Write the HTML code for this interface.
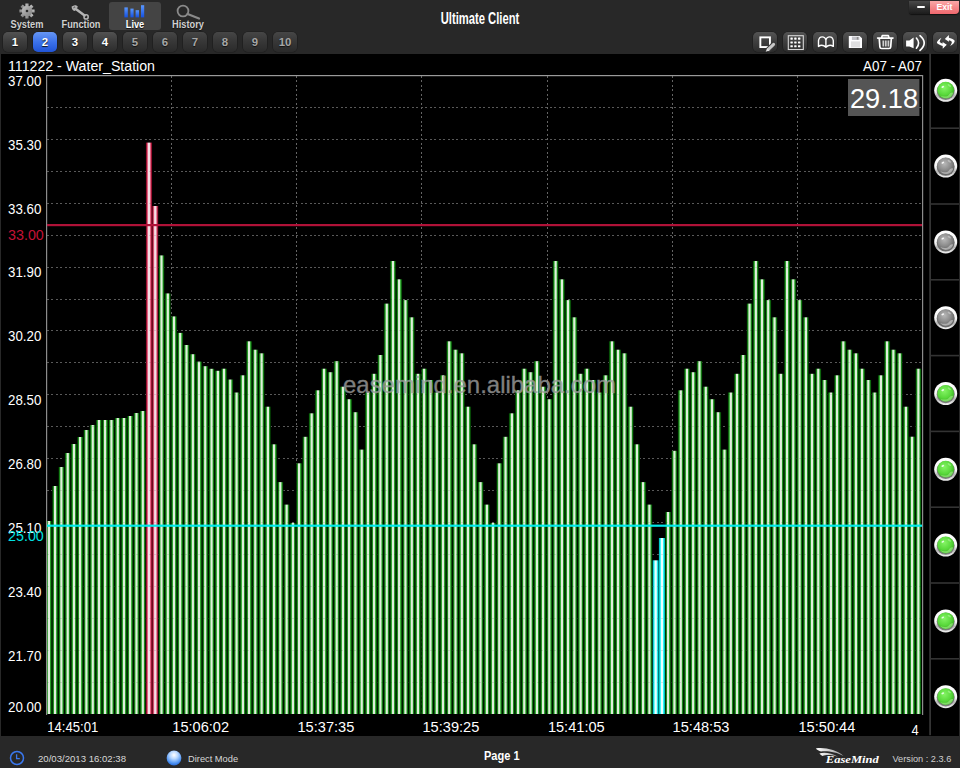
<!DOCTYPE html>
<html lang="en">
<head>
<meta charset="utf-8">
<title>Ultimate Client</title>
<style>
html,body{margin:0;padding:0;background:#282828;}
body{width:960px;height:768px;overflow:hidden;position:relative;font-family:"Liberation Sans",sans-serif;}
#app{position:absolute;left:0;top:0;width:960px;height:768px;background:#282828;overflow:hidden;}
.topbar{position:absolute;left:0;top:0;width:960px;height:54px;}
.tab{position:absolute;top:1.5px;height:28px;border-radius:3px;}
.tab.active{background:#444;}
.tab .lbl{position:absolute;left:-10px;right:-10px;top:17.1px;text-align:center;font-weight:bold;font-size:10.6px;line-height:11px;color:#d0d0d0;white-space:nowrap;transform:scaleX(0.87);text-shadow:0 1px 1px #111;}
.tab.active .lbl{color:#fff;}
.tab svg{position:absolute;}
.title{position:absolute;left:380px;width:200px;top:9.2px;text-align:center;color:#fff;font-weight:bold;font-size:17px;line-height:20px;transform:scaleX(0.66);transform-origin:50% 50%;white-space:nowrap;}
.pb{position:absolute;top:31.8px;width:24px;height:20.6px;border-radius:5px;background:linear-gradient(#525252,#3e3e3e 45%,#2c2c2c);color:#fff;font-weight:bold;font-size:11.4px;line-height:21px;text-align:center;box-shadow:0 0 0 0.6px #1c1c1c;text-shadow:0 1px 1px #111;}
.pb.dim{color:#a6a6a6;background:linear-gradient(#464646,#383838 45%,#2a2a2a);}
.pb.sel{background:linear-gradient(#6696f4,#3c72ea 50%,#2054d6);}
.tb{position:absolute;top:31.8px;width:24px;height:20.6px;border-radius:5px;background:linear-gradient(#545454,#404040 45%,#2c2c2c);box-shadow:0 0 0 0.6px #1c1c1c;}
.tb svg{position:absolute;left:0;top:0;}
.winmin{position:absolute;left:909px;top:1px;width:21px;height:12.5px;background:linear-gradient(#4a4a4a,#303030 50%,#1c1c1c);border-radius:0 0 0 3px;box-shadow:0 1px 1px #111;}
.winmin i{position:absolute;left:7.5px;top:4.8px;width:8.5px;height:2.4px;background:#fff;border-radius:1px;}
.winexit{position:absolute;left:930px;top:1px;width:28.8px;height:13.4px;background:linear-gradient(#f9a8a8,#f58a8c 45%,#f0686e 100%);border-radius:0 0 4px 0;color:#fff;font-weight:bold;font-size:8.7px;line-height:13px;text-align:center;box-shadow:0 1px 1px #111;}
.panel{position:absolute;left:1.2px;top:53.5px;width:957.7px;height:682px;background:#000;}
.panel svg{position:absolute;left:-1.2px;top:-53.5px;}
.status{position:absolute;left:0;top:735.2px;width:960px;height:32.8px;color:#d8d8d8;font-size:9.6px;}
.status span{position:absolute;white-space:nowrap;line-height:12px;}
.status svg{position:absolute;}
</style>
</head>
<body>
<div id="app">
<div class="topbar">
  <div class="tab" style="left:5px;width:44px">
    <svg width="20" height="20" viewBox="-10 -10 20 20" style="left:12.2px;top:-0.3px">
      <defs><linearGradient id="gg" x1="0" y1="0" x2="1" y2="1"><stop offset="0" stop-color="#c4c4c4"/><stop offset="1" stop-color="#7e7e7e"/></linearGradient></defs>
      <g fill="url(#gg)">
        <rect x="-1.6" y="-7.6" width="3.2" height="15.2" rx="0.3"/>
        <rect x="-1.6" y="-7.6" width="3.2" height="15.2" rx="0.3" transform="rotate(45)"/>
        <rect x="-1.6" y="-7.6" width="3.2" height="15.2" rx="0.3" transform="rotate(90)"/>
        <rect x="-1.6" y="-7.6" width="3.2" height="15.2" rx="0.3" transform="rotate(135)"/>
        <circle r="5.2"/>
      </g>
      <circle r="1.3" fill="#2a2a2a"/>
    </svg>
    <div class="lbl">System</div>
  </div>
  <div class="tab" style="left:59px;width:44px">
    <svg width="24" height="20" viewBox="0 0 24 20" style="left:10px;top:1.5px">
      <path d="M6.2 5.4 L15.6 12.6" stroke="#b4b4b4" stroke-width="2.5" stroke-linecap="round" fill="none"/>
      <path d="M2.6 3.6 L5 2.4 L5.6 3.8 L4.4 4.6 L5.2 6 L6.8 5.4 L7.6 6.6 L5.6 8 C3.8 7.8 2.6 6 2.6 3.6Z" fill="#b4b4b4"/>
      <path d="M5 2.4 C6.4 1.8 8.2 2.4 9 4 L7.4 5.2 L5.6 3.8Z" fill="#b4b4b4"/>
      <circle cx="17.1" cy="13.9" r="2.1" fill="none" stroke="#b4b4b4" stroke-width="1.5"/>
    </svg>
    <div class="lbl">Function</div>
  </div>
  <div class="tab active" style="left:109px;width:52px">
    <svg width="52" height="20" viewBox="0 0 52 20" style="left:0;top:0">
      <defs><linearGradient id="lb" x1="0" y1="0" x2="0" y2="1"><stop offset="0" stop-color="#5a98ff"/><stop offset="1" stop-color="#1450e0"/></linearGradient></defs>
      <rect x="15.4" y="5.4" width="3.4" height="10" fill="url(#lb)"/>
      <rect x="21.4" y="6.6" width="3.2" height="8.8" fill="url(#lb)"/>
      <rect x="26.6" y="8.2" width="3.4" height="7.2" fill="url(#lb)"/>
      <rect x="32" y="3.2" width="3.2" height="12.2" fill="url(#lb)"/>
    </svg>
    <div class="lbl">Live</div>
  </div>
  <div class="tab" style="left:166px;width:44px">
    <svg width="34" height="20" viewBox="0 0 34 20" style="left:5px;top:0">
      <circle cx="12" cy="9" r="5.4" fill="none" stroke="#8a8a8a" stroke-width="1.8"/>
      <path d="M16.6 12 L28 16.5" stroke="#8a8a8a" stroke-width="2.2" stroke-linecap="round"/>
    </svg>
    <div class="lbl">History</div>
  </div>
  <div class="title">Ultimate Client</div>
  <div class="winmin"><i></i></div>
  <div class="winexit">Exit</div>
<div class="pb" style="left:3px">1</div>
<div class="pb sel" style="left:33px">2</div>
<div class="pb" style="left:63px">3</div>
<div class="pb" style="left:93px">4</div>
<div class="pb dim" style="left:123px">5</div>
<div class="pb dim" style="left:153px">6</div>
<div class="pb dim" style="left:183px">7</div>
<div class="pb dim" style="left:213px">8</div>
<div class="pb dim" style="left:243px">9</div>
<div class="pb dim" style="left:273px">10</div>
  <div class="tb" style="left:753px"><svg width="24" height="21" viewBox="0 0 24 21">
    <rect x="7.35" y="5.35" width="9.6" height="9.7" fill="none" stroke="#fff" stroke-width="1.9"/>
    <path d="M22.4 10.6 L14.2 18.8" stroke="#3a3a3a" stroke-width="5.4"/>
    <path d="M20.6 12.4 L15.4 17.4" stroke="#c8c8c8" stroke-width="3" stroke-linecap="round"/>
    <path d="M14.2 16.2 L12.7 19.7 L16.4 18.4z" fill="#e4e4e4"/>
  </svg></div>
  <div class="tb" style="left:783px"><svg width="24" height="21" viewBox="0 0 24 21">
    <rect x="5.3" y="3.7" width="15" height="13.8" fill="none" stroke="#d8d8d8" stroke-width="1.1"/>
    <g fill="#fff">
      <rect x="7.4" y="5.6" width="2.4" height="2.1" rx="0.4"/><rect x="11.2" y="5.6" width="2.4" height="2.1" rx="0.4"/><rect x="15" y="5.6" width="2.4" height="2.1" rx="0.4"/>
      <rect x="7.4" y="9.4" width="2.4" height="2.1" rx="0.4"/><rect x="11.2" y="9.4" width="2.4" height="2.1" rx="0.4"/><rect x="15" y="9.4" width="2.4" height="2.1" rx="0.4"/>
      <rect x="7.4" y="13.2" width="2.4" height="2.1" rx="0.4"/><rect x="11.2" y="13.2" width="2.4" height="2.1" rx="0.4"/><rect x="15" y="13.2" width="2.4" height="2.1" rx="0.4"/>
    </g>
  </svg></div>
  <div class="tb" style="left:813px"><svg width="24" height="21" viewBox="0 0 24 21">
    <path d="M5.5 14.4 L5.5 8.6 C6 5.8 7.8 4.9 9.2 4.9 C10.8 4.9 12.4 6 12.9 7.9 C13.4 6 15 4.9 16.6 4.9 C18 4.9 19.8 5.8 20.3 8.6 L20.3 14.4 C18 12.7 15 13.1 12.9 15.3 C10.8 13.1 7.8 12.7 5.5 14.4 Z M12.9 7.9 L12.9 15.3" fill="none" stroke="#fff" stroke-width="1.4" stroke-linejoin="round"/>
  </svg></div>
  <div class="tb" style="left:843px"><svg width="24" height="21" viewBox="0 0 24 21">
    <path d="M5.8 3.9 L16.6 3.9 L19 6.3 L19 16.1 L5.8 16.1 Z" fill="#fdfdff"/>
    <rect x="8.9" y="4.6" width="7.5" height="3.4" fill="#c2c2c8"/>
    <rect x="13.8" y="5" width="1.5" height="2.6" fill="#8c8c8c"/>
    <rect x="7.9" y="9.4" width="9.2" height="6" fill="#dedee0"/>
  </svg></div>
  <div class="tb" style="left:873px"><svg width="24" height="21" viewBox="0 0 24 21">
    <path d="M4.6 6.1 L20 6.1 M8.6 5.8 L9.3 3.6 L15.3 3.6 L16 5.8" fill="none" stroke="#fff" stroke-width="1.6" stroke-linecap="round" stroke-linejoin="round"/>
    <path d="M6.3 7 L6.9 15 Q7 16.5 8.6 16.5 L16 16.5 Q17.6 16.5 17.7 15 L18.3 7" fill="none" stroke="#fff" stroke-width="1.7"/>
    <path d="M10.3 8.4 L10.3 14.4 M12.8 8.4 L12.8 14.4 M15.4 8.4 L15.4 14.4" stroke="#cfcfcf" stroke-width="1.7"/>
  </svg></div>
  <div class="tb" style="left:903px"><svg width="24" height="21" viewBox="0 0 24 21">
    <path d="M3.1 8.4 L6.4 8.4 L10.6 5.4 L10.6 16.2 L6.4 14.4 L3.1 14.4 Z" fill="#fff"/>
    <path d="M13.4 6 Q17.8 11 13.4 16.2" fill="none" stroke="#fff" stroke-width="1.6" stroke-linecap="round"/>
    <path d="M17 3.7 Q25.4 11 17 18.4" fill="none" stroke="#fff" stroke-width="1.7" stroke-linecap="round"/>
  </svg></div>
  <div class="tb" style="left:933px"><svg width="24" height="21" viewBox="0 0 24 21">
    <g transform="translate(12.8 9.9) scale(1.1) translate(-12.8 -9.9)"><path id="ra" d="M8.9 6.2 C6.2 7.6 4.6 9.6 4.7 11 C6.2 12.4 8 13.2 10 13.6 L10 16.1 L13.7 12.5 L9.9 10 L10 11.4 C8.6 11.2 7.6 10.4 7.2 9.8 C7.4 8.6 8 7.4 8.9 6.2 Z" fill="#fff"/>
    <use href="#ra" transform="rotate(180 12.8 9.9)"/></g>
  </svg></div>
</div>

<div class="panel">
<svg width="960" height="768" viewBox="0 0 960 768" font-family="'Liberation Sans', sans-serif">
  <defs>
    <linearGradient id="g" x1="0" y1="0" x2="1" y2="0">
      <stop offset="0" stop-color="#001400"/><stop offset="0.08" stop-color="#033c03"/><stop offset="0.2" stop-color="#168216"/><stop offset="0.29" stop-color="#3cb03c"/>
      <stop offset="0.39" stop-color="#e0eedc"/><stop offset="0.61" stop-color="#e0eedc"/><stop offset="0.71" stop-color="#3cb03c"/><stop offset="0.8" stop-color="#168216"/><stop offset="0.92" stop-color="#033c03"/><stop offset="1" stop-color="#001400"/>
    </linearGradient>
    <linearGradient id="r" x1="0" y1="0" x2="1" y2="0">
      <stop offset="0" stop-color="#500612"/><stop offset="0.1" stop-color="#9a1030"/><stop offset="0.25" stop-color="#e05c7c"/>
      <stop offset="0.4" stop-color="#f5dee4"/><stop offset="0.6" stop-color="#f5dee4"/><stop offset="0.75" stop-color="#e05c7c"/><stop offset="0.9" stop-color="#9a1030"/><stop offset="1" stop-color="#500612"/>
    </linearGradient>
    <linearGradient id="c" x1="0" y1="0" x2="1" y2="0">
      <stop offset="0" stop-color="#007878"/><stop offset="0.1" stop-color="#00c8c8"/><stop offset="0.25" stop-color="#30f4f4"/>
      <stop offset="0.4" stop-color="#e8ffff"/><stop offset="0.6" stop-color="#e8ffff"/><stop offset="0.75" stop-color="#30f4f4"/><stop offset="0.9" stop-color="#00c8c8"/><stop offset="1" stop-color="#007878"/>
    </linearGradient>
    <linearGradient id="ring" x1="0" y1="0" x2="0" y2="1">
      <stop offset="0" stop-color="#ffffff"/><stop offset="0.55" stop-color="#f6f6f6"/><stop offset="0.74" stop-color="#b4b4b4"/><stop offset="0.88" stop-color="#dcdcdc"/><stop offset="1" stop-color="#f0f0f0"/>
    </linearGradient>
    <radialGradient id="ballon" cx="0.42" cy="0.36" r="0.7">
      <stop offset="0" stop-color="#84f464"/><stop offset="0.6" stop-color="#58d83a"/><stop offset="1" stop-color="#32a41c"/>
    </radialGradient>
    <radialGradient id="balloff" cx="0.42" cy="0.36" r="0.7">
      <stop offset="0" stop-color="#b8b8b8"/><stop offset="0.55" stop-color="#8c8c8c"/><stop offset="1" stop-color="#5c5c5c"/>
    </radialGradient>
    <g id="ledon">
      <circle r="11.5" fill="url(#ring)"/>
      <circle r="9" cy="0.7" fill="#7c7c7c"/>
      <circle r="8.4" cy="-0.1" fill="url(#ballon)"/>
      <ellipse cx="-2.9" cy="-3.4" rx="1.5" ry="0.9" fill="#f0fff0" opacity="0.9" transform="rotate(-25 -2.9 -3.4)"/>
      <ellipse cx="3.6" cy="-4.8" rx="2" ry="0.9" fill="#c8ffb8" opacity="0.45" transform="rotate(35 3.6 -4.8)"/>
      <path d="M-5.4 5.2 C-2 6.6 1.6 6.4 3 4.6 C4.2 2.8 6 1.6 7.4 2.6 C6.6 6 3.6 8 0 8 C-2.4 8 -4.2 6.8 -5.4 5.2Z" fill="#b8f8a0" opacity="0.5"/>
    </g>
    <g id="ledoff">
      <circle r="11.5" fill="url(#ring)"/>
      <circle r="9" cy="0.7" fill="#6c6c6c"/>
      <circle r="8.4" cy="-0.1" fill="url(#balloff)"/>
      <ellipse cx="-2.9" cy="-3.4" rx="1.5" ry="0.9" fill="#ffffff" opacity="0.9" transform="rotate(-25 -2.9 -3.4)"/>
      <ellipse cx="3.6" cy="-4.8" rx="2" ry="0.9" fill="#ffffff" opacity="0.35" transform="rotate(35 3.6 -4.8)"/>
      <path d="M-5.4 5.2 C-2 6.6 1.6 6.4 3 4.6 C4.2 2.8 6 1.6 7.4 2.6 C6.6 6 3.6 8 0 8 C-2.4 8 -4.2 6.8 -5.4 5.2Z" fill="#e8e8e8" opacity="0.5"/>
    </g>
  </defs>

  <!-- left edge -->
  <!-- chart frame -->
  <g stroke="#646464" stroke-width="1" stroke-dasharray="2 2.45" fill="none" shape-rendering="crispEdges">
<line x1="47" y1="107.43" x2="922" y2="107.43"/>
<line x1="47" y1="139.36" x2="922" y2="139.36"/>
<line x1="47" y1="171.29" x2="922" y2="171.29"/>
<line x1="47" y1="203.22" x2="922" y2="203.22"/>
<line x1="47" y1="235.15" x2="922" y2="235.15"/>
<line x1="47" y1="267.08" x2="922" y2="267.08"/>
<line x1="47" y1="299.01" x2="922" y2="299.01"/>
<line x1="47" y1="330.94" x2="922" y2="330.94"/>
<line x1="47" y1="362.87" x2="922" y2="362.87"/>
<line x1="47" y1="394.8" x2="922" y2="394.8"/>
<line x1="47" y1="426.73" x2="922" y2="426.73"/>
<line x1="47" y1="458.65999999999997" x2="922" y2="458.65999999999997"/>
<line x1="47" y1="490.59" x2="922" y2="490.59"/>
<line x1="47" y1="522.52" x2="922" y2="522.52"/>
<line x1="47" y1="554.45" x2="922" y2="554.45"/>
<line x1="47" y1="586.38" x2="922" y2="586.38"/>
<line x1="47" y1="618.31" x2="922" y2="618.31"/>
<line x1="47" y1="650.24" x2="922" y2="650.24"/>
<line x1="47" y1="682.17" x2="922" y2="682.17"/>
<line x1="171.5" y1="76" x2="171.5" y2="714"/>
<line x1="296.5" y1="76" x2="296.5" y2="714"/>
<line x1="421.5" y1="76" x2="421.5" y2="714"/>
<line x1="547.5" y1="76" x2="547.5" y2="714"/>
<line x1="672.5" y1="76" x2="672.5" y2="714"/>
<line x1="797.5" y1="76" x2="797.5" y2="714"/>
  </g>
  <g>
<rect x="45.80" y="521.0" width="6.2" height="193.0" fill="url(#g)"/>
<rect x="52.06" y="486.0" width="6.2" height="228.0" fill="url(#g)"/>
<rect x="58.31" y="467.0" width="6.2" height="247.0" fill="url(#g)"/>
<rect x="64.57" y="453.0" width="6.2" height="261.0" fill="url(#g)"/>
<rect x="70.82" y="444.0" width="6.2" height="270.0" fill="url(#g)"/>
<rect x="77.08" y="437.0" width="6.2" height="277.0" fill="url(#g)"/>
<rect x="83.33" y="430.0" width="6.2" height="284.0" fill="url(#g)"/>
<rect x="89.59" y="425.0" width="6.2" height="289.0" fill="url(#g)"/>
<rect x="95.84" y="420.0" width="6.2" height="294.0" fill="url(#g)"/>
<rect x="102.10" y="420.0" width="6.2" height="294.0" fill="url(#g)"/>
<rect x="108.35" y="420.0" width="6.2" height="294.0" fill="url(#g)"/>
<rect x="114.61" y="418.0" width="6.2" height="296.0" fill="url(#g)"/>
<rect x="120.87" y="418.0" width="6.2" height="296.0" fill="url(#g)"/>
<rect x="127.12" y="416.0" width="6.2" height="298.0" fill="url(#g)"/>
<rect x="133.38" y="413.0" width="6.2" height="301.0" fill="url(#g)"/>
<rect x="139.63" y="411.0" width="6.2" height="303.0" fill="url(#g)"/>
<rect x="145.89" y="142.6" width="6.2" height="571.4" fill="url(#r)"/>
<rect x="152.14" y="206.0" width="6.2" height="508.0" fill="url(#r)"/>
<rect x="158.40" y="255.4" width="6.2" height="458.6" fill="url(#g)"/>
<rect x="164.65" y="293.4" width="6.2" height="420.6" fill="url(#g)"/>
<rect x="170.91" y="316.4" width="6.2" height="397.6" fill="url(#g)"/>
<rect x="177.17" y="332.9" width="6.2" height="381.1" fill="url(#g)"/>
<rect x="183.42" y="345.0" width="6.2" height="369.0" fill="url(#g)"/>
<rect x="189.68" y="354.2" width="6.2" height="359.8" fill="url(#g)"/>
<rect x="195.93" y="361.6" width="6.2" height="352.4" fill="url(#g)"/>
<rect x="202.19" y="366.2" width="6.2" height="347.8" fill="url(#g)"/>
<rect x="208.44" y="368.8" width="6.2" height="345.2" fill="url(#g)"/>
<rect x="214.70" y="370.8" width="6.2" height="343.2" fill="url(#g)"/>
<rect x="220.95" y="368.7" width="6.2" height="345.3" fill="url(#g)"/>
<rect x="227.21" y="379.5" width="6.2" height="334.5" fill="url(#g)"/>
<rect x="233.46" y="392.5" width="6.2" height="321.5" fill="url(#g)"/>
<rect x="239.72" y="375.3" width="6.2" height="338.7" fill="url(#g)"/>
<rect x="245.98" y="341.3" width="6.2" height="372.7" fill="url(#g)"/>
<rect x="252.23" y="349.7" width="6.2" height="364.3" fill="url(#g)"/>
<rect x="258.49" y="353.3" width="6.2" height="360.7" fill="url(#g)"/>
<rect x="264.74" y="406.7" width="6.2" height="307.3" fill="url(#g)"/>
<rect x="271.00" y="444.3" width="6.2" height="269.7" fill="url(#g)"/>
<rect x="277.25" y="482.1" width="6.2" height="231.9" fill="url(#g)"/>
<rect x="283.51" y="504.6" width="6.2" height="209.4" fill="url(#g)"/>
<rect x="289.76" y="522.9" width="6.2" height="191.1" fill="url(#g)"/>
<rect x="296.02" y="463.3" width="6.2" height="250.7" fill="url(#g)"/>
<rect x="302.28" y="436.8" width="6.2" height="277.2" fill="url(#g)"/>
<rect x="308.53" y="413.3" width="6.2" height="300.7" fill="url(#g)"/>
<rect x="314.79" y="390.3" width="6.2" height="323.7" fill="url(#g)"/>
<rect x="321.04" y="368.7" width="6.2" height="345.3" fill="url(#g)"/>
<rect x="327.30" y="372.2" width="6.2" height="341.8" fill="url(#g)"/>
<rect x="333.55" y="361.2" width="6.2" height="352.8" fill="url(#g)"/>
<rect x="339.81" y="386.7" width="6.2" height="327.3" fill="url(#g)"/>
<rect x="346.06" y="399.2" width="6.2" height="314.8" fill="url(#g)"/>
<rect x="352.32" y="412.2" width="6.2" height="301.8" fill="url(#g)"/>
<rect x="358.57" y="449.6" width="6.2" height="264.4" fill="url(#g)"/>
<rect x="364.83" y="392.5" width="6.2" height="321.5" fill="url(#g)"/>
<rect x="371.09" y="373.8" width="6.2" height="340.2" fill="url(#g)"/>
<rect x="377.34" y="355.0" width="6.2" height="359.0" fill="url(#g)"/>
<rect x="383.60" y="303.6" width="6.2" height="410.4" fill="url(#g)"/>
<rect x="389.85" y="261.0" width="6.2" height="453.0" fill="url(#g)"/>
<rect x="396.11" y="279.3" width="6.2" height="434.7" fill="url(#g)"/>
<rect x="402.36" y="300.1" width="6.2" height="413.9" fill="url(#g)"/>
<rect x="408.62" y="317.3" width="6.2" height="396.7" fill="url(#g)"/>
<rect x="414.87" y="373.8" width="6.2" height="340.2" fill="url(#g)"/>
<rect x="421.13" y="368.7" width="6.2" height="345.3" fill="url(#g)"/>
<rect x="427.39" y="380.0" width="6.2" height="334.0" fill="url(#g)"/>
<rect x="433.64" y="392.5" width="6.2" height="321.5" fill="url(#g)"/>
<rect x="439.90" y="375.3" width="6.2" height="338.7" fill="url(#g)"/>
<rect x="446.15" y="341.3" width="6.2" height="372.7" fill="url(#g)"/>
<rect x="452.41" y="349.7" width="6.2" height="364.3" fill="url(#g)"/>
<rect x="458.66" y="353.3" width="6.2" height="360.7" fill="url(#g)"/>
<rect x="464.92" y="406.7" width="6.2" height="307.3" fill="url(#g)"/>
<rect x="471.17" y="444.3" width="6.2" height="269.7" fill="url(#g)"/>
<rect x="477.43" y="482.1" width="6.2" height="231.9" fill="url(#g)"/>
<rect x="483.69" y="504.6" width="6.2" height="209.4" fill="url(#g)"/>
<rect x="489.94" y="522.9" width="6.2" height="191.1" fill="url(#g)"/>
<rect x="496.20" y="463.3" width="6.2" height="250.7" fill="url(#g)"/>
<rect x="502.45" y="436.8" width="6.2" height="277.2" fill="url(#g)"/>
<rect x="508.71" y="413.3" width="6.2" height="300.7" fill="url(#g)"/>
<rect x="514.96" y="390.3" width="6.2" height="323.7" fill="url(#g)"/>
<rect x="521.22" y="368.7" width="6.2" height="345.3" fill="url(#g)"/>
<rect x="527.47" y="372.2" width="6.2" height="341.8" fill="url(#g)"/>
<rect x="533.73" y="361.2" width="6.2" height="352.8" fill="url(#g)"/>
<rect x="539.98" y="386.7" width="6.2" height="327.3" fill="url(#g)"/>
<rect x="546.24" y="399.2" width="6.2" height="314.8" fill="url(#g)"/>
<rect x="552.50" y="261.0" width="6.2" height="453.0" fill="url(#g)"/>
<rect x="558.75" y="279.3" width="6.2" height="434.7" fill="url(#g)"/>
<rect x="565.01" y="300.1" width="6.2" height="413.9" fill="url(#g)"/>
<rect x="571.26" y="317.3" width="6.2" height="396.7" fill="url(#g)"/>
<rect x="577.52" y="373.8" width="6.2" height="340.2" fill="url(#g)"/>
<rect x="583.77" y="368.7" width="6.2" height="345.3" fill="url(#g)"/>
<rect x="590.03" y="380.0" width="6.2" height="334.0" fill="url(#g)"/>
<rect x="596.28" y="392.5" width="6.2" height="321.5" fill="url(#g)"/>
<rect x="602.54" y="375.3" width="6.2" height="338.7" fill="url(#g)"/>
<rect x="608.79" y="341.3" width="6.2" height="372.7" fill="url(#g)"/>
<rect x="615.05" y="349.7" width="6.2" height="364.3" fill="url(#g)"/>
<rect x="621.31" y="353.3" width="6.2" height="360.7" fill="url(#g)"/>
<rect x="627.56" y="406.7" width="6.2" height="307.3" fill="url(#g)"/>
<rect x="633.82" y="444.3" width="6.2" height="269.7" fill="url(#g)"/>
<rect x="640.07" y="482.1" width="6.2" height="231.9" fill="url(#g)"/>
<rect x="646.33" y="504.6" width="6.2" height="209.4" fill="url(#g)"/>
<rect x="652.58" y="560.3" width="6.2" height="153.7" fill="url(#c)"/>
<rect x="658.84" y="538.0" width="6.2" height="176.0" fill="url(#c)"/>
<rect x="665.09" y="512.0" width="6.2" height="202.0" fill="url(#g)"/>
<rect x="671.35" y="450.8" width="6.2" height="263.2" fill="url(#g)"/>
<rect x="677.61" y="390.3" width="6.2" height="323.7" fill="url(#g)"/>
<rect x="683.86" y="368.7" width="6.2" height="345.3" fill="url(#g)"/>
<rect x="690.12" y="372.2" width="6.2" height="341.8" fill="url(#g)"/>
<rect x="696.37" y="361.2" width="6.2" height="352.8" fill="url(#g)"/>
<rect x="702.63" y="386.7" width="6.2" height="327.3" fill="url(#g)"/>
<rect x="708.88" y="399.2" width="6.2" height="314.8" fill="url(#g)"/>
<rect x="715.14" y="412.2" width="6.2" height="301.8" fill="url(#g)"/>
<rect x="721.39" y="449.6" width="6.2" height="264.4" fill="url(#g)"/>
<rect x="727.65" y="392.5" width="6.2" height="321.5" fill="url(#g)"/>
<rect x="733.90" y="373.8" width="6.2" height="340.2" fill="url(#g)"/>
<rect x="740.16" y="355.0" width="6.2" height="359.0" fill="url(#g)"/>
<rect x="746.42" y="303.6" width="6.2" height="410.4" fill="url(#g)"/>
<rect x="752.67" y="261.0" width="6.2" height="453.0" fill="url(#g)"/>
<rect x="758.93" y="279.3" width="6.2" height="434.7" fill="url(#g)"/>
<rect x="765.18" y="300.1" width="6.2" height="413.9" fill="url(#g)"/>
<rect x="771.44" y="317.3" width="6.2" height="396.7" fill="url(#g)"/>
<rect x="777.69" y="373.8" width="6.2" height="340.2" fill="url(#g)"/>
<rect x="783.95" y="261.0" width="6.2" height="453.0" fill="url(#g)"/>
<rect x="790.20" y="279.3" width="6.2" height="434.7" fill="url(#g)"/>
<rect x="796.46" y="300.1" width="6.2" height="413.9" fill="url(#g)"/>
<rect x="802.72" y="317.3" width="6.2" height="396.7" fill="url(#g)"/>
<rect x="808.97" y="373.8" width="6.2" height="340.2" fill="url(#g)"/>
<rect x="815.23" y="368.7" width="6.2" height="345.3" fill="url(#g)"/>
<rect x="821.48" y="380.0" width="6.2" height="334.0" fill="url(#g)"/>
<rect x="827.74" y="392.5" width="6.2" height="321.5" fill="url(#g)"/>
<rect x="833.99" y="375.3" width="6.2" height="338.7" fill="url(#g)"/>
<rect x="840.25" y="341.3" width="6.2" height="372.7" fill="url(#g)"/>
<rect x="846.50" y="349.7" width="6.2" height="364.3" fill="url(#g)"/>
<rect x="852.76" y="353.3" width="6.2" height="360.7" fill="url(#g)"/>
<rect x="859.01" y="368.7" width="6.2" height="345.3" fill="url(#g)"/>
<rect x="865.27" y="380.0" width="6.2" height="334.0" fill="url(#g)"/>
<rect x="871.53" y="392.5" width="6.2" height="321.5" fill="url(#g)"/>
<rect x="877.78" y="375.3" width="6.2" height="338.7" fill="url(#g)"/>
<rect x="884.04" y="341.3" width="6.2" height="372.7" fill="url(#g)"/>
<rect x="890.29" y="349.7" width="6.2" height="364.3" fill="url(#g)"/>
<rect x="896.55" y="353.3" width="6.2" height="360.7" fill="url(#g)"/>
<rect x="902.80" y="406.7" width="6.2" height="307.3" fill="url(#g)"/>
<rect x="909.06" y="436.7" width="6.2" height="277.3" fill="url(#g)"/>
<rect x="915.31" y="368.7" width="6.2" height="345.3" fill="url(#g)"/>
  </g>
  <!-- faint grid over bars -->
  <g stroke="#000" stroke-opacity="0.1" stroke-width="1" stroke-dasharray="2 2.45" fill="none" shape-rendering="crispEdges">
<line x1="47" y1="107.43" x2="922" y2="107.43"/>
<line x1="47" y1="139.36" x2="922" y2="139.36"/>
<line x1="47" y1="171.29" x2="922" y2="171.29"/>
<line x1="47" y1="203.22" x2="922" y2="203.22"/>
<line x1="47" y1="235.15" x2="922" y2="235.15"/>
<line x1="47" y1="267.08" x2="922" y2="267.08"/>
<line x1="47" y1="299.01" x2="922" y2="299.01"/>
<line x1="47" y1="330.94" x2="922" y2="330.94"/>
<line x1="47" y1="362.87" x2="922" y2="362.87"/>
<line x1="47" y1="394.8" x2="922" y2="394.8"/>
<line x1="47" y1="426.73" x2="922" y2="426.73"/>
<line x1="47" y1="458.65999999999997" x2="922" y2="458.65999999999997"/>
<line x1="47" y1="490.59" x2="922" y2="490.59"/>
<line x1="47" y1="522.52" x2="922" y2="522.52"/>
<line x1="47" y1="554.45" x2="922" y2="554.45"/>
<line x1="47" y1="586.38" x2="922" y2="586.38"/>
<line x1="47" y1="618.31" x2="922" y2="618.31"/>
<line x1="47" y1="650.24" x2="922" y2="650.24"/>
<line x1="47" y1="682.17" x2="922" y2="682.17"/>
  </g>
  <rect x="46" y="75" width="1.2" height="640" fill="#8c8c8c"/>
  <rect x="46" y="75" width="877" height="1.2" fill="#9a9a9a"/>
  <rect x="922" y="75" width="1.2" height="640" fill="#8c8c8c"/>

  <!-- alarm lines -->
  <rect x="47" y="224" width="875" height="2.2" fill="#b01238"/>
  <rect x="47" y="524.6" width="875" height="2.2" fill="#00eaea"/>

  <!-- watermark -->
  <text x="343" y="393" font-size="24" fill="#9c9c9c" stroke="#9c9c9c" stroke-width="0.35" opacity="0.82" textLength="273" lengthAdjust="spacingAndGlyphs">easemind.en.alibaba.com</text>

  <!-- labels -->
  <g fill="#fff" font-size="13.8">
<text x="8" y="85.8" textLength="33.3" lengthAdjust="spacingAndGlyphs">37.00</text>
<text x="8" y="149.7" textLength="33.3" lengthAdjust="spacingAndGlyphs">35.30</text>
<text x="8" y="213.5" textLength="33.3" lengthAdjust="spacingAndGlyphs">33.60</text>
<text x="8" y="277.4" textLength="33.3" lengthAdjust="spacingAndGlyphs">31.90</text>
<text x="8" y="341.2" textLength="33.3" lengthAdjust="spacingAndGlyphs">30.20</text>
<text x="8" y="405.1" textLength="33.3" lengthAdjust="spacingAndGlyphs">28.50</text>
<text x="8" y="469.0" textLength="33.3" lengthAdjust="spacingAndGlyphs">26.80</text>
<text x="8" y="532.8" textLength="33.3" lengthAdjust="spacingAndGlyphs">25.10</text>
<text x="8" y="596.7" textLength="33.3" lengthAdjust="spacingAndGlyphs">23.40</text>
<text x="8" y="660.5" textLength="33.3" lengthAdjust="spacingAndGlyphs">21.70</text>
<text x="8" y="712" textLength="33.3" lengthAdjust="spacingAndGlyphs">20.00</text>
  </g>
  <text x="8" y="240" font-size="14.2" fill="#c41236" textLength="35.8" lengthAdjust="spacingAndGlyphs">33.00</text>
  <text x="8" y="541" font-size="14.2" fill="#00e0e0" textLength="35.8" lengthAdjust="spacingAndGlyphs">25.00</text>
  <g fill="#fff" font-size="14">
<text x="47.3" y="732.2" textLength="51" lengthAdjust="spacingAndGlyphs">14:45:01</text>
<text x="172.3" y="732.2" textLength="56.8" lengthAdjust="spacingAndGlyphs">15:06:02</text>
<text x="297.5" y="732.2" textLength="56.8" lengthAdjust="spacingAndGlyphs">15:37:35</text>
<text x="422.5" y="732.2" textLength="56.8" lengthAdjust="spacingAndGlyphs">15:39:25</text>
<text x="547.9" y="732.2" textLength="56.8" lengthAdjust="spacingAndGlyphs">15:41:05</text>
<text x="672.6" y="732.2" textLength="56.8" lengthAdjust="spacingAndGlyphs">15:48:53</text>
<text x="798.5" y="732.2" textLength="56.8" lengthAdjust="spacingAndGlyphs">15:50:44</text>
  </g>
  <text x="8" y="70.5" font-size="14" fill="#fff" textLength="147" lengthAdjust="spacingAndGlyphs">111222 - Water_Station</text>
  <text x="863" y="70.8" font-size="14" fill="#fff" textLength="59" lengthAdjust="spacingAndGlyphs">A07 - A07</text>
  <text x="911.5" y="735" font-size="14" fill="#fff" textLength="7.2" lengthAdjust="spacingAndGlyphs">4</text>

  <!-- value box -->
  <rect x="848" y="79" width="71.4" height="37" fill="#555"/>
  <text x="850" y="108.2" font-size="27.4" fill="#fff" textLength="68" lengthAdjust="spacingAndGlyphs">29.18</text>

  <!-- right LED column -->
  <rect x="929.2" y="53.5" width="1.8" height="681.7" fill="#343434"/>
<rect x="931" y="127.4" width="28" height="1.6" fill="#333"/>
<rect x="931" y="203.2" width="28" height="1.6" fill="#333"/>
<rect x="931" y="279.0" width="28" height="1.6" fill="#333"/>
<rect x="931" y="354.8" width="28" height="1.6" fill="#333"/>
<rect x="931" y="430.6" width="28" height="1.6" fill="#333"/>
<rect x="931" y="506.4" width="28" height="1.6" fill="#333"/>
<rect x="931" y="582.2" width="28" height="1.6" fill="#333"/>
<rect x="931" y="658.0" width="28" height="1.6" fill="#333"/>
<use href="#ledon" x="945.7" y="90.3"/>
<use href="#ledoff" x="945.7" y="166.1"/>
<use href="#ledoff" x="945.7" y="241.9"/>
<use href="#ledoff" x="945.7" y="317.7"/>
<use href="#ledon" x="945.7" y="393.5"/>
<use href="#ledon" x="945.7" y="469.3"/>
<use href="#ledon" x="945.7" y="545.1"/>
<use href="#ledon" x="945.7" y="620.9"/>
<use href="#ledon" x="945.7" y="696.7"/>
</svg>
</div>

<div class="status">
  <svg width="18" height="18" viewBox="0 0 18 18" style="left:7.6px;top:14px">
    <circle cx="9" cy="9" r="6.5" fill="none" stroke="#3a78f0" stroke-width="1.5"/>
    <path d="M8.6 5.2 L8.6 9.6 L11.8 9.6" fill="none" stroke="#3a78f0" stroke-width="1.3"/>
  </svg>
  <span style="left:38px;top:17.6px;">20/03/2013 16:02:38</span>
  <svg width="18" height="18" viewBox="0 0 18 18" style="left:165px;top:14px">
    <defs><radialGradient id="bb" cx="0.5" cy="0.3" r="0.75"><stop offset="0" stop-color="#ffffff"/><stop offset="0.35" stop-color="#b8d8ff"/><stop offset="0.75" stop-color="#4a90f0"/><stop offset="1" stop-color="#1c5cd0"/></radialGradient></defs>
    <circle cx="9" cy="9" r="7.4" fill="url(#bb)"/>
  </svg>
  <span style="left:188px;top:17.6px;font-size:9.3px;">Direct Mode</span>
  <span style="left:483.5px;top:14px;color:#fff;font-weight:bold;font-size:12.2px;line-height:14px;transform:scaleX(0.905);transform-origin:0 50%;">Page 1</span>
  <svg width="70" height="20" viewBox="0 0 70 20" style="left:812px;top:11px" font-family="'Liberation Serif', serif">
    <defs><linearGradient id="lg" x1="0" y1="0" x2="1" y2="0"><stop offset="0" stop-color="#fff"/><stop offset="1" stop-color="#9a9a9a"/></linearGradient></defs>
    <path d="M3.8 2.4 C12 1 25 3.6 31.5 10 C25 5.8 15 4.6 9 5.4 C7 4.8 5 3.8 3.8 2.4 Z" fill="url(#lg)"/>
    <path d="M7.4 7.4 C12 6 20 6.8 26 10.8 C20 8.6 14 8.4 10.6 10 C9.4 9.2 8.4 8.4 7.4 7.4 Z" fill="url(#lg)"/>
    <text x="13.8" y="16.6" font-size="9.8" font-weight="bold" font-style="italic" fill="#fff" textLength="53" lengthAdjust="spacingAndGlyphs">EaseMind</text>
  </svg>
  <span style="left:892.5px;top:17.6px;color:#cfcfcf;font-size:9.2px;">Version : 2.3.6</span>
</div>
</div>
</body>
</html>
